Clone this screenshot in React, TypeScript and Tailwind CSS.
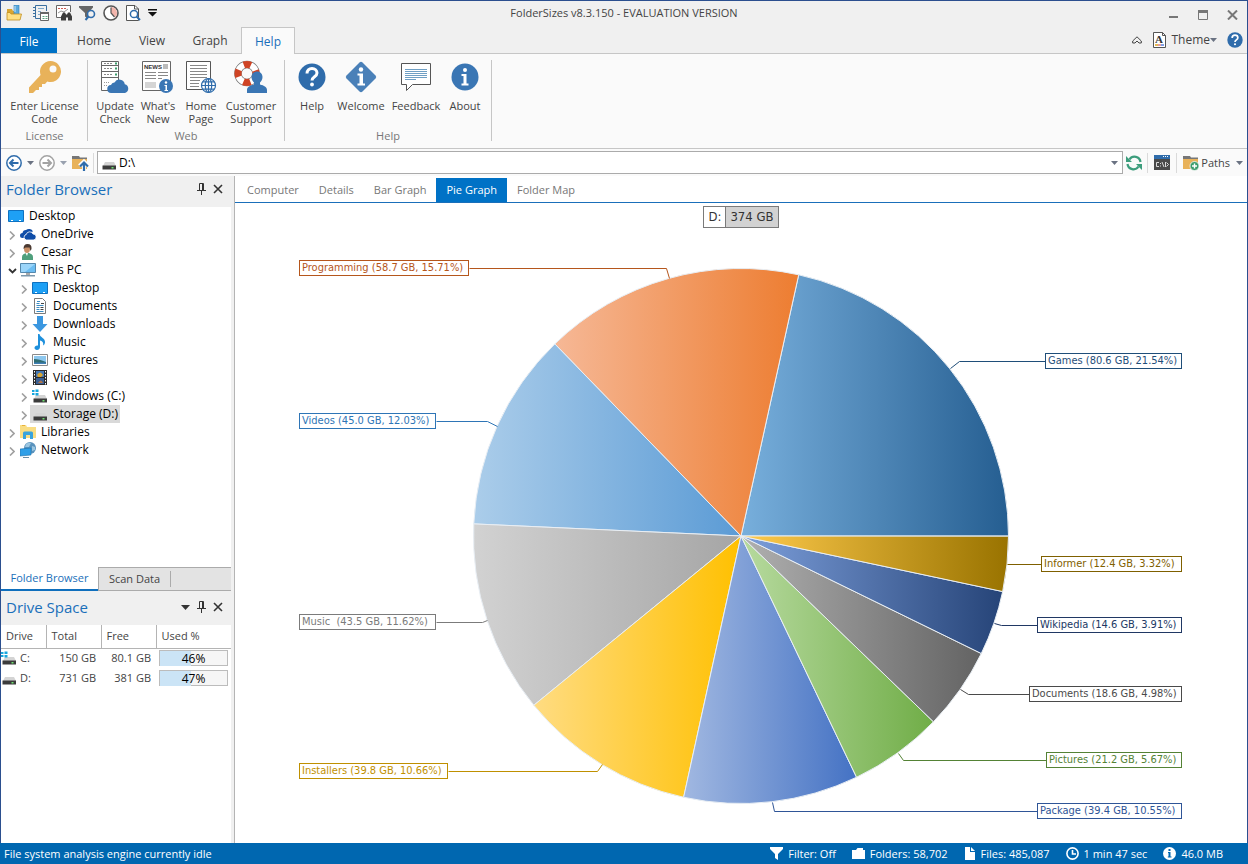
import type { ReactNode } from 'react';

const MENU_TABS = ['Home', 'View', 'Graph', 'Help'];
const VIEW_TABS = ['Computer', 'Details', 'Bar Graph', 'Pie Graph', 'Folder Map'];

/* ---------- quick access icons ---------- */

function OpenFolderIcon() {
  return (
    <svg width="16" height="16" viewBox="0 0 16 16">
      <path d="M1 4h5l1 2h5v8H1z" fill="#d9a531" />
      <path d="M8 0h5v10H8z" fill="#5aa9dc" stroke="#2f7fb8" strokeWidth=".6" />
      <path d="M8 2h2M8 4h2M8 6h2" stroke="#fff" strokeWidth=".7" />
      <path d="M1 15V7.500h3L5 9h10.500L14 15z" fill="#ffe083" stroke="#c08e1f" strokeWidth=".8" />
    </svg>
  );
}

function ReportIcon() {
  return (
    <svg width="16" height="16" viewBox="0 0 16 16" fill="none">
      <path d="M7 13.500H2.500V.5h11V6" stroke="#3b6f9f" />
      <path d="M0 2.500h3M0 5.500h3M0 8.500h3M0 11.500h3" stroke="#3b6f9f" />
      <path d="M5 3.500h6M5 6.500h3M5 9.500h2" stroke="#7fa9cc" />
      <path d="M7.500 7.500h8v8h-8z" fill="#fff" stroke="#666" />
      <path d="M7 7h9v2H7z" fill="#666" />
      <path d="M9.500 11.500h2M12.500 11.500h2M9.500 13.500h2M12.500 13.500h2" stroke="#5aa37e" />
    </svg>
  );
}

function FindIcon() {
  return (
    <svg width="16" height="16" viewBox="0 0 16 16" fill="none">
      <path d="M5 12.500H.5V.5h14V7" stroke="#666" fill="#fff" />
      <path d="M2 3.500h2M5 3.500h2M8 3.500h2" stroke="#cc5a50" />
      <path d="m2 8 3-2 3 1 4-3" stroke="#999" />
      <path d="M6 9.500 7 7.500h2l1 2h1l1-2h2l2 4v4h-4v-3h-2v3H5v-4z" fill="#3d3d3d" />
    </svg>
  );
}

function FilterSearchIcon() {
  return (
    <svg width="17" height="16" viewBox="0 0 17 16" fill="none">
      <path d="M0 1h14v1.500L9 8v6l-3-2.500V8L0 2.500z" fill="#666" />
      <circle cx="12" cy="9" r="3.500" stroke="#2f6cab" strokeWidth="1.600" fill="#f0f0f0" />
      <path d="m9.500 11.500-3 3.500" stroke="#2f6cab" strokeWidth="2" />
    </svg>
  );
}

function ScheduleIcon() {
  return (
    <svg width="16" height="16" viewBox="0 0 16 16" fill="none">
      <circle cx="8" cy="8" r="7" fill="#fff" stroke="#555" strokeWidth="1.600" />
      <path d="M8 8V2a6 6 0 0 1 4.300 10.200z" fill="#f3b5ac" />
      <path d="M8 2.500V8l3.500 4" stroke="#555" strokeWidth="1.200" />
    </svg>
  );
}

function PreviewIcon() {
  return (
    <svg width="15" height="16" viewBox="0 0 15 16" fill="none">
      <path d="M5 15.500H.5V.5H9L12.500 4v11.500z" fill="#fff" stroke="#555" />
      <path d="M8.500.5V4h4" stroke="#555" />
      <circle cx="8" cy="9" r="3.600" fill="#fff" stroke="#2f6cab" strokeWidth="1.500" />
      <path d="m10.500 11.500 3.500 3.500" stroke="#2f6cab" strokeWidth="2" />
    </svg>
  );
}

/* ---------- ribbon icons ---------- */

function KeyIcon() {
  return (
    <svg width="34" height="34" viewBox="0 0 34 34">
      <path
        d="M22.500 1a10.500 10.500 0 1 1-3.200 20.500L17 24h-3v3h-3v3H8l-3 3H1v-5.500L12.600 15A10.500 10.500 0 0 1 22.500 1z"
        fill="#e8b25a"
      />
      <circle cx="25" cy="9" r="3.500" fill="#fafafa" />
    </svg>
  );
}

function UpdateIcon() {
  return (
    <svg width="32" height="34" viewBox="0 0 32 34" fill="none">
      <path d="M2.500 1.500h17v29h-17z" fill="#fff" stroke="#666" />
      <path d="M2.500 5.500h17M2.500 11.500h17M2.500 17.500h17" stroke="#666" />
      <path d="M5 3.500h9M5 8.500h9M5 14.500h9" stroke="#888" strokeDasharray="2 1" />
      <path d="M16 3.500h2M16 8.500h2M16 14.500h2" stroke="#3c9d6c" strokeWidth="2" />
      <path d="M5 22.500h6M5 25.500h4" stroke="#999" strokeDasharray="1 1" />
      <path
        d="M12.500 33a4 4 0 0 1-.5-8 3.500 3.500 0 0 1 3.500-2.500 5.500 5.500 0 0 1 10.300 1.800A4.500 4.500 0 0 1 26 33z"
        fill="#3a76b4"
      />
    </svg>
  );
}

function InfoBadge() {
  return (
    <g>
      <circle cx="7" cy="7" r="7" fill="#3a76b4" />
      <circle cx="7" cy="3.500" r="1.200" fill="#fff" />
      <path d="M5.500 6H8v5h1v1H5.500v-1h1V7h-1z" fill="#fff" />
    </g>
  );
}

function NewsIcon() {
  return (
    <svg width="32" height="34" viewBox="0 0 32 34" fill="none">
      <path d="M.5 1.500h28v29H.5z" fill="#fff" stroke="#666" />
      <text x="2" y="9" fontSize="6" fontWeight="700" fill="#333" fontFamily="Liberation Sans, sans-serif">
        NEWS
      </text>
      <path d="M21 4h5v5h-5z" fill="#bbb" />
      <path d="M3 12.500h11M16 12.500h10M3 15.500h11M16 15.500h10M3 18.500h11M16 18.500h4" stroke="#888" />
      <path d="M3 22h11v6H3z" fill="#d5d5d5" />
      <g transform="translate(17 19)">
        <InfoBadge />
      </g>
    </svg>
  );
}

function HomePageIcon() {
  return (
    <svg width="32" height="34" viewBox="0 0 32 34" fill="none">
      <path d="M1.500 1.500h24v28h-24z" fill="#fff" stroke="#555" />
      <path
        d="M5 5.500h17M5 8.500h17M5 11.500h17M5 14.500h17M5 17.500h17M5 20.500h10M5 23.500h9M5 26.500h9"
        stroke="#888"
      />
      <g stroke="#2f6cab" strokeWidth="1.200">
        <circle cx="23.500" cy="25.500" r="7" fill="#fff" />
        <ellipse cx="23.500" cy="25.500" rx="3.200" ry="7" />
        <path d="M23.500 18.500v14M16.500 25.500h14M17.500 21.900h12M17.500 29.100h12" />
      </g>
    </svg>
  );
}

function SupportIcon() {
  return (
    <svg width="34" height="34" viewBox="0 0 34 34" fill="none">
      <circle cx="13" cy="13.500" r="9" stroke="#777" strokeWidth="7.500" />
      <circle cx="13" cy="13.500" r="9" stroke="#fff" strokeWidth="6" />
      <circle
        cx="13"
        cy="13.500"
        r="9"
        stroke="#cf4425"
        strokeWidth="7"
        strokeDasharray="7.070 7.070"
        strokeDashoffset="3.500"
      />
      <path
        d="M23 11.500c3.500 0 5.500 2.500 5.500 5.500 0 2.500-1.200 4.500-2.500 5.500v2c4 1 7 2.500 7 5.500v3H13v-3c0-3 3-4.500 7-5.500v-2c-1.300-1-2.500-3-2.500-5.500 0-3 2-5.500 5.500-5.500z"
        fill="#3a76b4"
      />
    </svg>
  );
}

function HelpIcon({ size = 28 }: { size?: number }) {
  return (
    <svg width={size} height={size} viewBox="0 0 28 28" fill="none">
      <circle cx="14" cy="14" r="13.500" fill="#2f6cab" />
      <path
        d="M9 10.500C9 7.500 11 5.500 14 5.500s5 1.900 5 4.500c0 3.800-5 3.700-5 7.500"
        stroke="#fff"
        strokeWidth="3"
      />
      <circle cx="14" cy="21.500" r="1.900" fill="#fff" />
    </svg>
  );
}

function WelcomeIcon() {
  return (
    <svg width="32" height="32" viewBox="0 0 32 32">
      <path d="M14.500 1.500q1.500-1.500 3 0l13 13q1.500 1.500 0 3l-13 13q-1.500 1.500-3 0l-13-13q-1.500-1.500 0-3z" fill="#4a80b8" />
      <circle cx="16" cy="8.500" r="2.200" fill="#fff" />
      <path d="M12.500 12.500H18v10h2v2h-7.500v-2h2v-8h-2z" fill="#fff" />
    </svg>
  );
}

function FeedbackIcon() {
  return (
    <svg width="32" height="32" viewBox="0 0 32 32" fill="none">
      <path d="M1.500 2.500h29v21h-18l-6 6v-6h-5z" fill="#fff" stroke="#555" />
      <path d="M5 8.500h22M5 10.500h22M5 12.500h22M5 14.500h22M5 16.500h22M5 18.500h11" stroke="#6f9fc4" />
    </svg>
  );
}

function AboutIcon() {
  return (
    <svg width="28" height="28" viewBox="0 0 28 28">
      <circle cx="14" cy="14" r="13.500" fill="#3a76b4" />
      <circle cx="14" cy="7" r="2" fill="#fff" />
      <path d="M10.500 11h5v9.500h2v2h-7v-2h2V13h-2z" fill="#fff" />
    </svg>
  );
}

/* ---------- small glyphs ---------- */

function Caret({ className = 'text-gray-500' }: { className?: string }) {
  return (
    <svg width="7" height="4" viewBox="0 0 7 4" className={className}>
      <path d="M0 0h7L3.500 4z" fill="currentColor" />
    </svg>
  );
}

function PinIcon() {
  return (
    <svg width="9" height="12" viewBox="0 0 9 12" fill="none" stroke="#333">
      <path d="M2.500 7V.5h4V7M0 7.500h9M4.500 8v4" />
      <path d="M5.500 1v6" />
    </svg>
  );
}

function CrossIcon() {
  return (
    <svg width="10" height="10" viewBox="0 0 10 10" fill="none">
      <path d="m1 1 8 8M9 1 1 9" stroke="#333" strokeWidth="1.600" />
    </svg>
  );
}

function ArrowCircle({ color, flip }: { color: string; flip?: boolean }) {
  return (
    <svg width="16" height="16" viewBox="0 0 16 16" fill="none" stroke={color} strokeWidth="1.500">
      <circle cx="8" cy="8" r="7.200" fill="#fff" />
      {flip ? (
        <path d="M3.500 8h8.500M8.500 4.500 12 8l-3.500 3.500" strokeWidth="2" />
      ) : (
        <path d="M12.500 8H4M7.500 4.500 4 8l3.500 3.500" strokeWidth="2" />
      )}
    </svg>
  );
}

function FolderUpIcon() {
  return (
    <svg width="17" height="16" viewBox="0 0 17 16" fill="none">
      <path d="M0 1h7l1 1.500h7V4H0z" fill="#777" />
      <path d="M0 4h15v10H0z" fill="#e8b25a" />
      <path d="M12 16V7M7.500 11 12 6.500l4.500 4.500" stroke="#fafafa" strokeWidth="4" />
      <path d="M12 16V8M8 11.500l4-4 4 4" stroke="#2f6cab" strokeWidth="2.200" />
    </svg>
  );
}

function RefreshIcon() {
  return (
    <svg width="16" height="16" viewBox="0 0 16 16" fill="none" stroke="#3c9d7c" strokeWidth="2.200">
      <path d="M3.500 4.500A6 6 0 0 1 14.500 7M12.500 11.500A6 6 0 0 1 1.500 9" />
      <path d="M0 1v6h6zM16 15V9h-6z" fill="#3c9d7c" stroke="none" />
    </svg>
  );
}

function ConsoleIcon() {
  return (
    <svg width="16" height="15" viewBox="0 0 16 15" fill="none">
      <path d="M0 0h16v15H0z" fill="#4a4a4a" />
      <path d="M0 0h16v4H0z" fill="#2f6cab" />
      <path d="M9 1.500h1M11 1.500h1M13 1.500h1" stroke="#fff" />
      <path
        d="M5 7.500H2.500v4H5M6.500 8v1M6.500 10.500v1M8 7l2 5M11.500 7v5M12.500 7.500l2 2-2 2"
        stroke="#fff"
        strokeWidth=".8"
      />
    </svg>
  );
}

function PathsIcon() {
  return (
    <svg width="16" height="16" viewBox="0 0 16 16" fill="none">
      <path d="M0 1h7l1 1.500h7V4H0z" fill="#777" />
      <path d="M0 4h15v10H0z" fill="#e8b25a" />
      <circle cx="11.500" cy="11" r="4.500" fill="#3c9d6c" stroke="#fafafa" strokeWidth=".8" />
      <path d="M11.500 8.500v5M9 11h5" stroke="#fff" strokeWidth="1.400" />
    </svg>
  );
}

function ThemeIcon() {
  return (
    <svg width="13" height="16" viewBox="0 0 13 16" fill="none">
      <path d="M.5.500h9l3 3v12H.5z" fill="#fff" stroke="#555" />
      <path d="M9.500.500v3h3" stroke="#555" />
      <text x="2" y="11" fontSize="11" fontWeight="700" fill="#333" fontFamily="Liberation Serif, serif">
        A
      </text>
      <path d="M2 12h3v2H2z" fill="#e6bb55" />
      <path d="M5 12h3v2H5z" fill="#e59aa0" />
      <path d="M8 12h3v2H8z" fill="#7f9fe6" />
    </svg>
  );
}

/* ---------- tree icons ---------- */

function DesktopIcon() {
  return (
    <svg width="16" height="16" viewBox="0 0 16 16">
      <path d="M.5 2.500h15v11H.5z" fill="#1ea0f5" stroke="#0f71c0" />
      <path d="M3 12.500h2M11 12.500h2" stroke="#fff" />
    </svg>
  );
}

function OneDriveIcon() {
  return (
    <svg width="16" height="16" viewBox="0 0 16 16" fill="#0f4da8">
      <path d="M2.500 12a2.500 2.500 0 0 1 0-5A3.500 3.500 0 0 1 6 4a4.500 4.500 0 0 1 7 1.500L9 6.500 5 9v3z" />
      <path
        d="M6.500 14a2.800 2.800 0 0 1-.3-5.500A3.600 3.600 0 0 1 13 8a3 3 0 0 1 .3 6z"
        stroke="#fff"
        strokeWidth=".8"
      />
    </svg>
  );
}

function UserIcon() {
  return (
    <svg width="16" height="16" viewBox="0 0 16 16">
      <path d="M2 16v-3q0-3 4-4h3q4 1 4 4v3z" fill="#4f9f7c" />
      <path d="M5.500 9h2.500l-1 3z" fill="#fff" />
      <ellipse cx="7" cy="5" rx="3" ry="4" fill="#c98f66" />
      <path d="M3.500 5q0-5 4-5 4.500 0 4 5l-1 2-1-3.500h-4z" fill="#4b3a32" />
    </svg>
  );
}

function ComputerIcon() {
  return (
    <svg width="16" height="16" viewBox="0 0 16 16">
      <path d="M.5 1.500h15v9H.5z" fill="#6cbdf2" stroke="#5588ad" />
      <path d="M1 2h14L5 10H1z" fill="#9bd5fa" />
      <path d="M6 11h4v2H6z" fill="#aaa" />
      <path d="M1 13h14v1.500H1z" fill="#7c97ab" />
    </svg>
  );
}

function DocumentIcon() {
  return (
    <svg width="16" height="16" viewBox="0 0 16 16" fill="none">
      <path d="M2.500.500h8l3 3v12h-11z" fill="#fff" stroke="#7b7b7b" />
      <path d="M5 3.500h3M4.500 5.500h3M4.500 7.500h7M4.500 11.500h3M4.500 13.500h7" stroke="#3b8bc2" />
      <path d="M4.500 9.500h3" stroke="#3b8bc2" />
      <path d="M8.500 9.500h3M8.500 11.500h3M9 5.500h3" stroke="#444" />
    </svg>
  );
}

function DownloadIcon() {
  return (
    <svg width="16" height="16" viewBox="0 0 16 16">
      <path d="M5 0h6v8h4.500L8 16 .5 8H5z" fill="#3b97e0" />
    </svg>
  );
}

function MusicIcon() {
  return (
    <svg width="16" height="16" viewBox="0 0 16 16">
      <path
        d="M6 0h1.500c.5 3.500 6 4 5.500 8.500-.2 1.500-1 2.500-2 3 1-3-1-4.500-3-5v6.500c0 1.700-1.500 3-3 3S2.500 15.100 2.500 13.800c0-1.600 1.700-2.800 3.500-2.300z"
        fill="#1e90dc"
      />
    </svg>
  );
}

function PictureIcon() {
  return (
    <svg width="16" height="16" viewBox="0 0 16 16">
      <path d="M.5 2.500h15v11H.5z" fill="#fff" stroke="#8a8a8a" />
      <path d="M2 4h12v8H2z" fill="#8cc7ee" />
      <path d="M2 7q5 0 12 3v2H2z" fill="#2f6d72" />
      <path d="M2 10.500h12V12H2z" fill="#3f7fb5" />
    </svg>
  );
}

function VideoIcon() {
  return (
    <svg width="16" height="16" viewBox="0 0 16 16" fill="none">
      <path d="M1 0h14v15H1z" fill="#2b2b2b" />
      <path d="M4 1h8v6H4z" fill="#4478b5" />
      <path d="M4 8h8v6H4z" fill="#3a5f93" />
      <path d="M5 5q3-5 6 0l-2 2H6z" fill="#d9a531" />
      <path d="M6 13q3-5 5 0z" fill="#b0764a" />
      <path d="M2.500 1v14M13.500 1v14" stroke="#fff" strokeDasharray="1.500 1.500" />
    </svg>
  );
}

function DriveIcon({ windows }: { windows?: boolean }) {
  return (
    <svg width="16" height="16" viewBox="0 0 16 16">
      <path d="M4 7h9l2 4H2z" fill="#d4d4d4" />
      <path d="M1.500 10.500h13.500v4H1.500z" fill="#3b3b3b" />
      <path d="M10.500 12h2v1.500h-2z" fill="#6fe070" />
      {windows ? (
        <path d="M0 2h2.500v2H0zM3.500 1.500h3V4h-3zM0 5h2.500v2H0zM3.500 5h3v2.500h-3z" fill="#16a6de" />
      ) : null}
    </svg>
  );
}

function LibraryIcon() {
  return (
    <svg width="16" height="16" viewBox="0 0 16 16">
      <path d="M0 1h6l1 2h9v11H0z" fill="#f9dd83" />
      <path d="M2 1.500h3" stroke="#e8b13b" />
      <path d="M3 15V9q0-1.500 1.500-1.500h7Q13 7.500 13 9v6h-3v-4H6v4z" fill="#38a3dd" />
    </svg>
  );
}

function NetworkIcon() {
  return (
    <svg width="16" height="16" viewBox="0 0 16 16">
      <circle cx="10" cy="6" r="6" fill="#5a93bd" />
      <path d="M6 2q3-2 5-1L9 5H5zM12 4l3 1v3l-3 1z" fill="#9cc6e0" />
      <path d="m0 7 11-1v7L0 14z" fill="#2f9fe8" stroke="#1c6faa" strokeWidth=".6" />
      <path d="M3 15.500h6" stroke="#6b8ea8" />
    </svg>
  );
}

interface TreeNode {
  label: string;
  level: number;
  icon: ReactNode;
  state?: 'open' | 'closed';
  selected?: boolean;
}

const TREE: TreeNode[] = [
  { label: 'Desktop', level: 0, icon: <DesktopIcon /> },
  { label: 'OneDrive', level: 1, icon: <OneDriveIcon />, state: 'closed' },
  { label: 'Cesar', level: 1, icon: <UserIcon />, state: 'closed' },
  { label: 'This PC', level: 1, icon: <ComputerIcon />, state: 'open' },
  { label: 'Desktop', level: 2, icon: <DesktopIcon />, state: 'closed' },
  { label: 'Documents', level: 2, icon: <DocumentIcon />, state: 'closed' },
  { label: 'Downloads', level: 2, icon: <DownloadIcon />, state: 'closed' },
  { label: 'Music', level: 2, icon: <MusicIcon />, state: 'closed' },
  { label: 'Pictures', level: 2, icon: <PictureIcon />, state: 'closed' },
  { label: 'Videos', level: 2, icon: <VideoIcon />, state: 'closed' },
  { label: 'Windows (C:)', level: 2, icon: <DriveIcon windows />, state: 'closed' },
  { label: 'Storage (D:)', level: 2, icon: <DriveIcon />, state: 'closed', selected: true },
  { label: 'Libraries', level: 1, icon: <LibraryIcon />, state: 'closed' },
  { label: 'Network', level: 1, icon: <NetworkIcon />, state: 'closed' },
];

const DRIVES = [
  { name: 'C:', total: '150 GB', free: '80.1 GB', used: 46, windows: true },
  { name: 'D:', total: '731 GB', free: '381 GB', used: 47, windows: false },
];

interface Slice {
  name: string;
  size: string;
  percent: number;
  from: string;
  to: string;
  ink: string;
  box: [number, number, number];
  leader: string;
}

// box is [left, top, width] of the label, leader is the polyline to the slice
const SLICES: Slice[] = [
  { name: 'Games', size: '80.6 GB', percent: 21.54, from: '#78afdc', to: '#255e91', ink: '#1f4e79', box: [1045, 353, 136], leader: '1045,361 959,361 950,368' },
  { name: 'Programming', size: '58.7 GB', percent: 15.71, from: '#f6b896', to: '#ed7d31', ink: '#b5561c', box: [299, 260, 169], leader: '469,268 666,268 669,278' },
  { name: 'Videos', size: '45.0 GB', percent: 12.03, from: '#abcdea', to: '#5b9bd5', ink: '#2e75b6', box: [299, 413, 136], leader: '436,421 487,421 497,426' },
  { name: 'Music ', size: '43.5 GB', percent: 11.62, from: '#d2d2d2', to: '#a5a5a5', ink: '#7b7b7b', box: [299, 614, 136], leader: '436,622 482,622 487,620' },
  { name: 'Installers', size: '39.8 GB', percent: 10.66, from: '#ffdc82', to: '#ffc000', ink: '#bf9000', box: [299, 763, 148], leader: '448,771 597,771 602,764' },
  { name: 'Package', size: '39.4 GB', percent: 10.55, from: '#a1b8e1', to: '#4472c4', ink: '#2f5597', box: [1037, 803, 144], leader: '1037,811 774,811 772,802' },
  { name: 'Pictures', size: '21.2 GB', percent: 5.67, from: '#b7da9f', to: '#70ad47', ink: '#548235', box: [1046, 752, 135], leader: '1046,760 903,760 898,753' },
  { name: 'Documents', size: '18.6 GB', percent: 4.98, from: '#b0b0b0', to: '#636363', ink: '#4a4a4a', box: [1029, 686, 152], leader: '1029,694 968,694 960,689' },
  { name: 'Wikipedia', size: '14.6 GB', percent: 3.91, from: '#7d9fdb', to: '#264478', ink: '#203864', box: [1037, 617, 144], leader: '1037,625 1001,625 994,623' },
  { name: 'Informer', size: '12.4 GB', percent: 3.32, from: '#ffcb4d', to: '#997300', ink: '#7f6000', box: [1041, 556, 140], leader: '1041,564 1007,564' },
];

const CX = 741;
const CY = 536;
const RADIUS = 267.5;

function pointAt(percent: number) {
  const angle = (percent / 100) * Math.PI * 2;
  return `${(CX + RADIUS * Math.cos(angle)).toFixed(2)} ${(CY - RADIUS * Math.sin(angle)).toFixed(2)}`;
}

function PieChart() {
  let start = 0;
  const arcs = SLICES.map((slice) => {
    const end = start + slice.percent;
    const d = `M${CX} ${CY}L${pointAt(start)}A${RADIUS} ${RADIUS} 0 0 0 ${pointAt(end)}Z`;
    start = end;
    return { ...slice, d };
  });

  return (
    <svg viewBox="235 228 1012 615" className="block w-full grow" role="img" aria-label="Folder sizes on D:">
      <defs>
        {arcs.map((arc, i) => (
          <linearGradient key={arc.name} id={`slice-${i}`}>
            <stop offset="0" stopColor={arc.from} />
            <stop offset="1" stopColor={arc.to} />
          </linearGradient>
        ))}
      </defs>
      {arcs.map((arc, i) => (
        <path key={arc.name} d={arc.d} fill={`url(#slice-${i})`} stroke="#e8eef4" strokeLinejoin="round" />
      ))}
      {arcs.map((arc) => (
        <g key={arc.name}>
          <polyline points={arc.leader} fill="none" stroke={arc.ink} transform="translate(.5 .5)" />
          <rect x={arc.box[0] + 0.5} y={arc.box[1] + 0.5} width={arc.box[2]} height="15" fill="#fff" stroke={arc.ink} />
          <text
            x={arc.box[0] + 3}
            y={arc.box[1] + 11}
            fill={arc.ink}
            className="whitespace-pre font-['DejaVu_Sans_Condensed','DejaVu_Sans',sans-serif] text-[11px]"
          >
            {`${arc.name} (${arc.size}, ${arc.percent.toFixed(2)}%)`}
          </text>
        </g>
      ))}
    </svg>
  );
}

function TitleBar() {
  return (
    <header className="grid h-[27px] grid-cols-[1fr_auto_1fr] items-center pb-[3px]">
      <div className="flex items-center gap-[7px] pl-[5px]">
        <button aria-label="Open" className="mr-1"><OpenFolderIcon /></button>
        <button aria-label="Reports"><ReportIcon /></button>
        <button aria-label="Search"><FindIcon /></button>
        <button aria-label="Filter"><FilterSearchIcon /></button>
        <button aria-label="Scheduler"><ScheduleIcon /></button>
        <button aria-label="Print preview"><PreviewIcon /></button>
        <button aria-label="Customize toolbar">
          <svg width="9" height="8" viewBox="0 0 9 8">
            <path d="M0 0h9v1.500H0zM0 3h9L4.500 7.500z" fill="#111" />
          </svg>
        </button>
      </div>
      <h1>FolderSizes v8.3.150 - EVALUATION VERSION</h1>
      <div className="flex items-center justify-end gap-[19px] pr-[9px] pt-1">
        <button aria-label="Minimize">
          <svg width="10" height="10" viewBox="0 0 10 10"><path d="M0 6h9v2H0z" fill="#777" /></svg>
        </button>
        <button aria-label="Maximize">
          <svg width="10" height="10" viewBox="0 0 10 10">
            <path d="M.5 1.500h9v8H.5z" fill="none" stroke="#777" />
            <path d="M0 0h10v3H0z" fill="#777" />
          </svg>
        </button>
        <button aria-label="Close">
          <svg width="11" height="10" viewBox="0 0 11 10">
            <path d="m1 .5 9 9M10 .5l-9 9" stroke="#777" strokeWidth="2" />
          </svg>
        </button>
      </div>
    </header>
  );
}

function MenuBar() {
  return (
    <nav className="flex h-[26px] items-end border-b border-[#c6c6c6] text-[12px]">
      <button className="h-[25px] w-14 bg-[#0072c6] pt-[2px] text-white">File</button>
      <div className="ml-2 flex">
        {MENU_TABS.map((tab) =>
          tab === 'Help' ? (
            <button
              key={tab}
              className="-mb-px ml-[2px] h-[27px] w-[54px] border border-b-0 border-[#c6c6c6] bg-[#fafafa] pt-px text-[#1a6fba]"
            >
              {tab}
            </button>
          ) : (
            <button key={tab} className="h-[26px] w-[58px] pt-[2px]">{tab}</button>
          ),
        )}
      </div>
      <div className="ml-auto flex h-[26px] items-center pr-1">
        <button aria-label="Collapse ribbon" className="mr-[11px]">
          <svg width="10" height="8" viewBox="0 0 10 8" fill="none" stroke="#444">
            <path d="M.7 5 5 .8 9.300 5v2H7L5 5 3 7H.7z" />
          </svg>
        </button>
        <button className="flex items-center gap-[5px]">
          <ThemeIcon />
          <span className="flex items-center">Theme<Caret /></span>
        </button>
        <button aria-label="Help" className="ml-[10px]"><HelpIcon size={16} /></button>
      </div>
    </nav>
  );
}

function RibbonGroup({ label, children }: { label: string; children: ReactNode }) {
  return (
    <section className="flex h-[81px] flex-col items-center border-r border-[#c6c6c6] px-[5px]">
      <div className="flex">{children}</div>
      <div className="mt-auto leading-[10px] text-[#777]">{label}</div>
    </section>
  );
}

function RibbonButton({ icon, label, width }: { icon: ReactNode; label: string; width: string }) {
  return (
    <button className={`flex flex-col items-center ${width}`}>
      <span className="flex h-[39px] items-start justify-center">
        <span className="flex h-[34px] items-center">{icon}</span>
      </span>
      <span className="whitespace-pre leading-[13px]">{label}</span>
    </button>
  );
}

function Ribbon() {
  return (
    <div className="flex h-[95px] border-b border-[#c6c6c6] bg-[#fafafa] pl-px pt-[6px]">
      <RibbonGroup label="License">
        <RibbonButton icon={<KeyIcon />} label={'Enter License\nCode'} width="w-[75px]" />
      </RibbonGroup>
      <RibbonGroup label="Web">
        <RibbonButton icon={<UpdateIcon />} label={'Update\nCheck'} width="w-11" />
        <RibbonButton icon={<NewsIcon />} label={"What's\nNew"} width="w-[42px]" />
        <RibbonButton icon={<HomePageIcon />} label={'Home\nPage'} width="w-11" />
        <RibbonButton icon={<SupportIcon />} label={'Customer\nSupport'} width="w-14" />
      </RibbonGroup>
      <RibbonGroup label="Help">
        <RibbonButton icon={<HelpIcon />} label="Help" width="w-11" />
        <RibbonButton icon={<WelcomeIcon />} label="Welcome" width="w-[54px]" />
        <RibbonButton icon={<FeedbackIcon />} label="Feedback" width="w-14" />
        <RibbonButton icon={<AboutIcon />} label="About" width="w-[42px]" />
      </RibbonGroup>
    </div>
  );
}

function AddressBar() {
  return (
    <div className="flex h-[27px] items-center bg-[#fafafa] pl-[5px] pr-1">
      <button aria-label="Back"><ArrowCircle color="#2f6cab" /></button>
      <button aria-label="Back history" className="ml-[5px]"><Caret /></button>
      <button aria-label="Forward" className="ml-[5px]"><ArrowCircle color="#a3a3a3" flip /></button>
      <button aria-label="Forward history" className="ml-[5px]"><Caret className="text-gray-400" /></button>
      <button aria-label="Up one level" className="ml-[5px]"><FolderUpIcon /></button>
      <span className="ml-1 mr-[3px] h-5 w-px bg-[#dadada]" />
      <label className="flex h-[23px] grow items-center border border-[#ababab] bg-white pl-[3px] pr-1 text-[12px] text-black">
        <DriveIcon />
        <select aria-label="Path" className="grow appearance-none pl-[2px] outline-none">
          <option>D:\</option>
        </select>
        <Caret />
      </label>
      <button aria-label="Refresh" className="ml-[3px]"><RefreshIcon /></button>
      <span className="ml-[5px] h-5 w-px bg-[#dadada]" />
      <button aria-label="Command prompt" className="mx-[6px]"><ConsoleIcon /></button>
      <span className="h-5 w-px bg-[#dadada]" />
      <button className="ml-[6px] flex items-center gap-[2px]">
        <PathsIcon />
        Paths
        <span className="ml-1"><Caret /></span>
      </button>
    </div>
  );
}

function PanelHeader({ title, menu }: { title: string; menu?: boolean }) {
  return (
    <div className="flex items-center gap-[7px] pl-[5px] pr-2">
      <h2 className="mr-auto text-[15px] leading-5 text-[#1a6fba]">{title}</h2>
      {menu ? (
        <button aria-label={`${title} menu`}>
          <svg width="9" height="5" viewBox="0 0 9 5"><path d="M0 0h9L4.500 5z" fill="#333" /></svg>
        </button>
      ) : null}
      <button aria-label={`Pin ${title}`}><PinIcon /></button>
      <button aria-label={`Close ${title}`}><CrossIcon /></button>
    </div>
  );
}

function TreeRow({ node }: { node: TreeNode }) {
  return (
    <li className={`flex h-[18px] items-center ${node.level === 2 ? 'pl-[17px]' : 'pl-[5px]'}`}>
      {node.state ? (
        <span className="flex w-3 justify-center pt-[2px]">
          {node.state === 'open' ? (
            <svg width="9" height="6" viewBox="0 0 9 6" fill="none">
              <path d="M1 1l3.500 3.500L8 1" stroke="#333" strokeWidth="1.800" />
            </svg>
          ) : (
            <svg width="6" height="9" viewBox="0 0 6 9" fill="none">
              <path d="M1 .5 5 4.500 1 8.500" stroke="#a0a0a0" strokeWidth="1.600" />
            </svg>
          )}
        </span>
      ) : null}
      <button className={`flex h-[18px] items-center gap-[5px] px-[2px] ${node.selected ? 'bg-[#d9d9d9]' : ''}`}>
        {node.icon}
        <span className="whitespace-nowrap">{node.label}</span>
      </button>
    </li>
  );
}

function DriveTable() {
  return (
    <table className="w-full table-fixed border-collapse">
      <thead>
        <tr className="h-[23px] border-b border-[#b4b4b4] text-left">
          <th className="w-[45px] pl-[5px] font-normal">Drive</th>
          <th className="w-[55px] border-l border-[#b4b4b4] pl-[5px] font-normal">Total</th>
          <th className="w-[55px] border-l border-[#b4b4b4] pl-[5px] font-normal">Free</th>
          <th className="border-l border-[#b4b4b4] pl-[5px] font-normal">Used %</th>
        </tr>
      </thead>
      <tbody>
        {DRIVES.map((drive) => (
          <tr key={drive.name} className="h-5">
            <td className="p-0">
              <span className="flex items-center gap-[3px]">
                <DriveIcon windows={drive.windows} />
                {drive.name}
              </span>
            </td>
            <td className="whitespace-nowrap p-0 pr-[5px] text-right">{drive.total}</td>
            <td className="whitespace-nowrap p-0 pr-[5px] text-right">{drive.free}</td>
            <td className="p-0 pl-[3px] pr-[3px]">
              <div className="grid h-4 border border-[#bcbcbc] bg-[#f6f6f6] text-[12px] text-black">
                <div className="col-start-1 row-start-1 bg-[#cbe4f6]" style={{ width: `${drive.used}%` }} />
                <div className="col-start-1 row-start-1 text-center leading-[15px]">{drive.used}%</div>
              </div>
            </td>
          </tr>
        ))}
      </tbody>
    </table>
  );
}

function Sidebar() {
  return (
    <aside className="flex w-[233px] shrink-0 flex-col bg-[#f0f0f0] pr-[3px]">
      <div className="flex h-[31px] flex-col justify-center pb-[6px]">
        <PanelHeader title="Folder Browser" />
      </div>
      <ul className="h-[360px] bg-white text-[12px] text-black">
        {TREE.map((node, i) => (
          <TreeRow key={i} node={node} />
        ))}
      </ul>
      <div className="flex h-6">
        <button className="w-[97px] border-b-2 border-[#0f6fbd] bg-white text-[#1a6fba]">Folder Browser</button>
        <div className="flex grow items-center border border-r-0 border-[#ababab] bg-[#e3e3e3]">
          <button className="h-4 w-[72px] border-r border-[#ababab] leading-4">Scan Data</button>
        </div>
      </div>
      <div className="flex h-[34px] flex-col justify-center pb-[2px]">
        <PanelHeader title="Drive Space" menu />
      </div>
      <div className="grow bg-white">
        <DriveTable />
      </div>
    </aside>
  );
}

function ChartPane() {
  return (
    <main className="flex min-w-0 grow flex-col border-l border-[#b4b4b4] bg-white">
      <nav className="flex h-[27px] items-end border-b border-[#1a6fba] pl-[2px] text-[#777]">
        {VIEW_TABS.map((tab) => (
          <button
            key={tab}
            className={tab === 'Pie Graph' ? 'h-6 bg-[#0072c6] px-[10px] text-white' : 'h-6 px-[10px]'}
          >
            {tab}
          </button>
        ))}
      </nav>
      <div className="mx-auto mt-[3px] flex h-[22px] border border-[#7a7a7a] font-['DejaVu_Sans_Condensed','DejaVu_Sans',sans-serif] text-[13px] leading-5 text-[#333]">
        <span className="px-1">D:</span>
        <span className="border-l border-[#7a7a7a] bg-[#d2d2d2] px-1">374 GB</span>
      </div>
      <PieChart />
    </main>
  );
}

const STATUS = [
  {
    text: 'Filter: Off',
    icon: (
      <svg width="13" height="13" viewBox="0 0 13 13"><path d="M0 0h13v2L8 7v6l-3-2V7L0 2z" fill="#fff" /></svg>
    ),
  },
  {
    text: 'Folders: 58,702',
    icon: (
      <svg width="13" height="13" viewBox="0 0 13 13"><path d="M0 3h4l1.500-2H11v2h2v9H0z" fill="#fff" /></svg>
    ),
  },
  {
    text: 'Files: 485,087',
    icon: (
      <svg width="12" height="13" viewBox="0 0 12 13"><path d="M1 0h5v5h5v8H1zM7 0l4 4H7z" fill="#fff" /></svg>
    ),
  },
  {
    text: '1 min 47 sec',
    icon: (
      <svg width="13" height="13" viewBox="0 0 13 13" fill="none" stroke="#fff" strokeWidth="1.600">
        <circle cx="6.500" cy="6.500" r="5.600" />
        <path d="M6.500 3v4H10" />
      </svg>
    ),
  },
  {
    text: '46.0 MB',
    icon: (
      <svg width="13" height="13" viewBox="0 0 13 13">
        <circle cx="6.500" cy="6.500" r="6.500" fill="#fff" />
        <path d="M5.500 2h2v2h-2zM5 5h2.500v4.500h1v1H4.800v-1h.7V6H5z" fill="#0067b0" />
      </svg>
    ),
  },
];

function StatusBar() {
  return (
    <footer className="flex h-[21px] items-center bg-[#0067b0] pl-1 pr-[25px] text-white">
      <span className="mr-auto">File system analysis engine currently idle</span>
      <div className="flex gap-4">
        {STATUS.map((item) => (
          <span key={item.text} className="flex items-center gap-[5px] whitespace-nowrap">
            {item.icon}
            {item.text}
          </span>
        ))}
      </div>
    </footer>
  );
}

export default function App() {
  return (
    <div className="flex min-h-screen flex-col bg-[#f0f0f0] font-['Open_Sans','Noto_Sans',sans-serif] text-[11px] leading-4 text-[#444]">
      <div className="flex grow flex-col border border-b-0 border-[#2b4f8f]">
        <TitleBar />
        <MenuBar />
        <Ribbon />
        <AddressBar />
        <div className="flex grow">
          <Sidebar />
          <ChartPane />
        </div>
      </div>
      <StatusBar />
    </div>
  );
}
